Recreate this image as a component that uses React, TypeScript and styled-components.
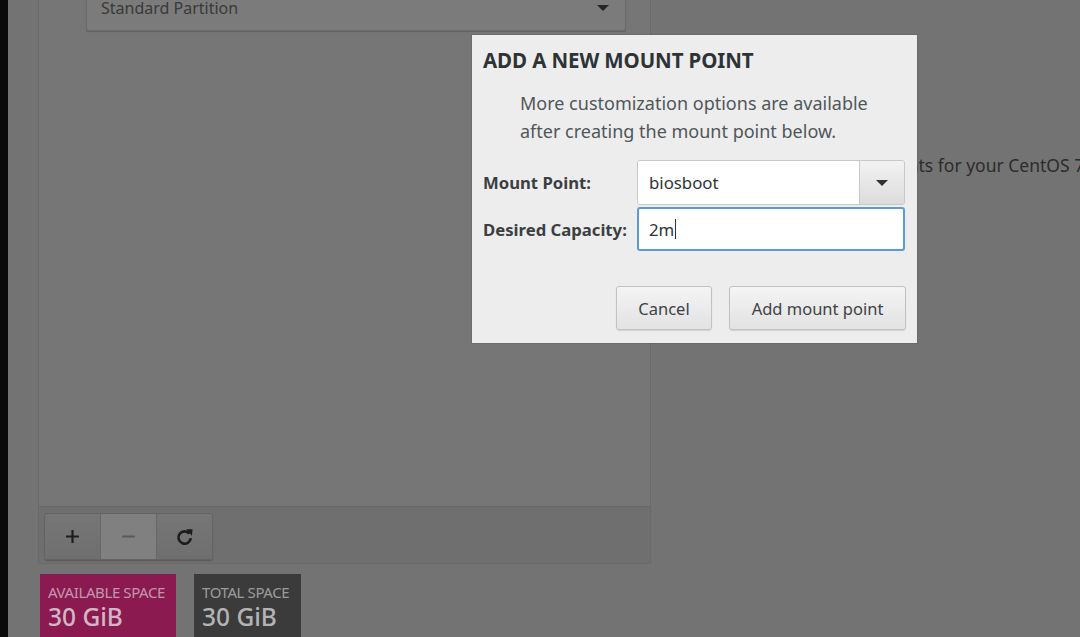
import React from "react";
import styled, { createGlobalStyle } from "styled-components";

const Global = createGlobalStyle`
  html, body { margin: 0; padding: 0; }
  body { width: 1080px; height: 637px; overflow: hidden; background: #737373; font-family: "Noto Sans", "DejaVu Sans", sans-serif; }
  #root { height: 637px; }
`;

const Page = styled.div`
  position: relative;
  display: flex;
  width: 1080px;
  height: 637px;
  overflow: hidden;
  background: #737373;
`;

const BlackStrip = styled.div`
  width: 8px;
  flex: none;
  background: #0a0a0a;
`;

const LeftColumn = styled.div`
  display: flex;
  flex-direction: column;
  margin-left: 30px;
  margin-top: -20px;
  width: 613px;
  flex: none;
`;

const Panel = styled.div`
  display: flex;
  flex-direction: column;
  flex: none;
  height: 584px;
  border: 1px solid #6a6a6a;
  border-top: none;
  background: #767676;
  box-sizing: border-box;
`;

const PanelBody = styled.div`
  flex: 1;
  padding: 11px 24px 0 47px;
`;

const SchemeSelect = styled.div`
  display: flex;
  align-items: center;
  justify-content: space-between;
  height: 40px;
  padding: 0 16px 6px 14px;
  box-sizing: border-box;
  background: #7b7b7b;
  border: 1px solid #6c6c6c;
  border-radius: 3px;
  box-shadow: 0 1px 1px rgba(0,0,0,0.18);
  color: #393939;
  font-size: 16px;
`;

const Caret = styled.span`
  width: 0;
  height: 0;
  border-left: 6px solid transparent;
  border-right: 6px solid transparent;
  border-top: 6px solid #252525;
`;

const Toolbar = styled.div`
  height: 57px;
  display: flex;
  align-items: flex-start;
  padding: 6px 0 0 5px;
  box-sizing: border-box;
  background: #6f6f6f;
  border-top: 1px solid #686868;
`;

const ToolGroup = styled.div`
  display: flex;
  border: 1px solid #646464;
  border-radius: 3px;
  overflow: hidden;
  box-shadow: 0 1px 1px rgba(0,0,0,0.2);
`;

const ToolButton = styled.div<{ $light?: boolean }>`
  width: 55px;
  height: 45px;
  display: flex;
  align-items: center;
  justify-content: center;
  background: ${(p) => (p.$light ? "#808080" : "linear-gradient(#767676, #6f6f6f)")};
  border-left: 1px solid #666;
  &:first-child { border-left: none; }
  color: #1c1c1c;
`;

const SpaceRow = styled.div`
  display: flex;
  gap: 18px;
  margin-top: 10px;
  margin-left: 2px;
`;

const SpaceBox = styled.div<{ $bg: string; $w: number; $fg: string }>`
  width: ${(p) => p.$w}px;
  height: 70px;
  background: ${(p) => p.$bg};
  padding: 10px 0 0 8px;
  box-sizing: border-box;
  color: ${(p) => p.$fg};
`;

const SpaceLabel = styled.div`
  font-size: 15px;
  letter-spacing: -0.4px;
  line-height: 17px;
  opacity: 0.8;
`;

const SpaceValue = styled.div`
  font-size: 24.5px;
  line-height: 32px;
  font-weight: 500;
`;

const RightArea = styled.div`
  flex: 1;
  padding-top: 153px;
  margin-left: -29px;
  white-space: nowrap;
  color: #2c2c2c;
  font-size: 17.5px;
`;

const Dialog = styled.div`
  position: absolute;
  left: 472px;
  top: 35px;
  width: 445px;
  height: 308px;
  box-sizing: border-box;
  background: #ededed;
  padding: 12px 11px 0 11px;
  box-shadow: 0 0 0 1px rgba(0,0,0,0.08);
  color: #2e3436;
`;

const Title = styled.div`
  font-size: 20.5px;
  font-weight: 700;
  letter-spacing: -0.1px;
  line-height: 26px;
  color: #2e3436;
`;

const Description = styled.div`
  margin: 16px 0 0 37px;
  font-size: 18px;
  line-height: 28px;
  color: #50575a;
`;

const FormGrid = styled.div`
  display: grid;
  grid-template-columns: 154px 268px;
  row-gap: 2px;
  margin-top: 15px;
  align-items: center;
`;

const Label = styled.div`
  font-size: 16.7px;
  font-weight: 700;
  color: #3b3f41;
`;

const Combo = styled.div`
  display: flex;
  height: 45px;
  border: 1px solid #c8c8c8;
  border-radius: 3px;
  overflow: hidden;
  box-sizing: border-box;
`;

const ComboEntry = styled.div`
  flex: 1;
  background: #fff;
  display: flex;
  align-items: center;
  padding-left: 11px;
  font-size: 16.8px;
  color: #2e3436;
`;

const ComboButton = styled.div`
  width: 44px;
  display: flex;
  align-items: center;
  justify-content: center;
  background: linear-gradient(#f2f2f2, #dcdcdc);
  border-left: 1px solid #c8c8c8;
`;

const Entry = styled.div`
  height: 44px;
  box-sizing: border-box;
  border: 2px solid #5b9bd9;
  border-radius: 3px;
  background: #fff;
  display: flex;
  align-items: center;
  padding-left: 10px;
  font-size: 16.8px;
  color: #2e3436;
`;

const Cursor = styled.span`
  display: inline-block;
  width: 1px;
  height: 20px;
  background: #2e3436;
  margin-left: 1px;
`;

const ButtonRow = styled.div`
  display: flex;
  justify-content: flex-end;
  gap: 17px;
  margin-top: 35px;
`;

const DialogButton = styled.div<{ $w: number }>`
  width: ${(p) => p.$w}px;
  height: 44px;
  box-sizing: border-box;
  display: flex;
  align-items: center;
  justify-content: center;
  border: 1px solid #c2c2c2;
  border-radius: 3px;
  background: linear-gradient(#f4f4f4, #e2e2e2);
  box-shadow: 0 1px 1px rgba(0,0,0,0.12);
  font-size: 16.5px;
  color: #3d4244;
`;

const DarkCaret = styled(Caret)`
  border-top-color: #2e3436;
`;

export default function App() {
  return (
    <>
      <Global />
      <Page>
        <BlackStrip />
        <LeftColumn>
          <Panel>
            <PanelBody>
              <SchemeSelect>
                <span>Standard Partition</span>
                <Caret />
              </SchemeSelect>
            </PanelBody>
            <Toolbar>
              <ToolGroup>
                <ToolButton>
                  <svg width="15" height="15" viewBox="0 0 14 14">
                    <path d="M7 1v12M1 7h12" stroke="#1c1c1c" strokeWidth="2" />
                  </svg>
                </ToolButton>
                <ToolButton $light>
                  <svg width="15" height="15" viewBox="0 0 14 14">
                    <path d="M1 7h12" stroke="#5a5a5a" strokeWidth="2" />
                  </svg>
                </ToolButton>
                <ToolButton>
                  <svg width="19" height="19" viewBox="0 0 16 16">
                    <path d="M12.2 5.6A5.2 5.2 0 1 0 13.3 9.4" fill="none" stroke="#1c1c1c" strokeWidth="2.2" />
                    <path d="M9.4 1.8L14.8 1.8L14.2 7.4Z" fill="#1c1c1c" />
                  </svg>
                </ToolButton>
              </ToolGroup>
            </Toolbar>
          </Panel>
          <SpaceRow>
            <SpaceBox $bg="#8a1a4f" $fg="#d3b6c5" $w={136}>
              <SpaceLabel>AVAILABLE SPACE</SpaceLabel>
              <SpaceValue>30 GiB</SpaceValue>
            </SpaceBox>
            <SpaceBox $bg="#3b3b3b" $fg="#b4b4b4" $w={107}>
              <SpaceLabel>TOTAL SPACE</SpaceLabel>
              <SpaceValue>30 GiB</SpaceValue>
            </SpaceBox>
          </SpaceRow>
        </LeftColumn>
        <RightArea>
          You haven't created any mount points for your CentOS 7 installation yet.
        </RightArea>
        <Dialog>
          <Title>ADD A NEW MOUNT POINT</Title>
          <Description>
            More customization options are available
            <br />
            after creating the mount point below.
          </Description>
          <FormGrid>
            <Label>Mount Point:</Label>
            <Combo>
              <ComboEntry>biosboot</ComboEntry>
              <ComboButton>
                <DarkCaret />
              </ComboButton>
            </Combo>
            <Label>Desired Capacity:</Label>
            <Entry>
              2m<Cursor />
            </Entry>
          </FormGrid>
          <ButtonRow>
            <DialogButton $w={96}>Cancel</DialogButton>
            <DialogButton $w={177}>Add mount point</DialogButton>
          </ButtonRow>
        </Dialog>
      </Page>
    </>
  );
}
